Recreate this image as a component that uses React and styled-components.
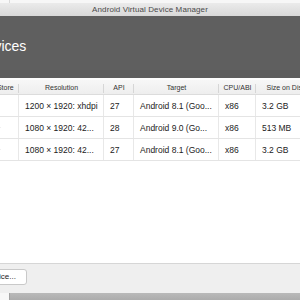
import React from 'react';
import styled, { createGlobalStyle } from 'styled-components';

const GlobalStyle = createGlobalStyle`
    html, body {
        margin: 0;
        padding: 0;
        width: 300px;
        height: 300px;
        overflow: hidden;
        background: #f7f7f7;
        font-family: "Liberation Sans", Arial, sans-serif;
    }
`

const Page = styled.div`
    display: flex;
    flex-direction: column;
    width: 300px;
    height: 300px;
    overflow: hidden;
`

const DeskStrip = styled.div`
    height: ${p => p.h}px;
    flex: none;
    background: ${p => p.bg};
    margin-left: 9px;
    border-left: 1px solid ${p => p.line};
`

const Window = styled.div`
    flex: none;
    display: flex;
    flex-direction: column;
    width: 500px;
    height: 290px;
    margin-left: -100px;
    background: #ececec;
`

const TitleBar = styled.div`
    height: 13px;
    flex: none;
    display: flex;
    align-items: center;
    justify-content: center;
    background: linear-gradient(#ebebeb, #d8d8d8);
    color: #4a4a4a;
    font-size: 8px;
    letter-spacing: 0.1px;
`

const Header = styled.div`
    height: 62px;
    flex: none;
    display: flex;
    align-items: center;
    padding-left: 1px;
    background: #5f5f5f;
    color: #ffffff;
    font-size: 14px;
    padding-bottom: 2px;
    box-sizing: border-box;
`

const Content = styled.div`
    flex: 1;
    display: flex;
    flex-direction: column;
    background: #ffffff;
    padding: 2px 0 0 8px;
`

const Grid = styled.div`
    display: grid;
    grid-template-columns: 32px 36px 43px 85px 30px 85px 37px 60px 64px;
`

const HeadRow = styled(Grid)`
    height: 14px;
    background: linear-gradient(#f7f7f7, #eeeeee);
    border-bottom: 1px solid #dcdcdc;
`

const HeadCell = styled.div`
    display: flex;
    align-items: center;
    justify-content: center;
    font-size: 7px;
    color: #333;
    position: relative;
    &:not(:last-child)::after {
        content: '';
        position: absolute;
        right: 0;
        top: 4px;
        bottom: 1px;
        width: 1px;
        background: #d6d6d6;
    }
`

const Row = styled(Grid)`
    height: 21px;
    border-bottom: 1px solid #e4e4e4;
`

const Cell = styled.div`
    display: flex;
    align-items: center;
    justify-content: ${p => (p.center ? 'center' : 'flex-start')};
    padding-left: ${p => (p.center ? 0 : 6)}px;
    font-size: 8.5px;
    color: #222;
    white-space: nowrap;
    overflow: hidden;
    border-right: 1px solid #e8e8e8;
    &:last-child {
        border-right: none;
    }
`

const Footer = styled.div`
    height: 30px;
    flex: none;
    box-sizing: border-box;
    display: flex;
    align-items: center;
    padding-left: 16px;
    background: #efefef;
    border-top: 1px solid #d6d6d6;
`

const Button = styled.button`
    height: 16px;
    width: 111px;
    padding: 0;
    background: #ffffff;
    border: 1px solid #c9c9c9;
    border-radius: 3px;
    font-family: "Liberation Sans", Arial, sans-serif;
    font-size: 8px;
    color: #222;
    margin-top: -4px;
`

const PhoneIcon = () => (
    <svg width="8" height="10" viewBox="0 0 8 10">
        <rect x="1" y="0.5" width="6" height="9" rx="1" fill="none" stroke="#777" />
    </svg>
)

const PlayIcon = () => (
    <svg width="7" height="7" viewBox="0 0 7 7">
        <path d="M0.5 0.5 L6.5 3.5 L0.5 6.5 Z" fill="#8a8a8a" />
    </svg>
)

const columns = ['Type', 'Name', 'Play Store', 'Resolution', 'API', 'Target', 'CPU/ABI', 'Size on Disk', 'Actions']

const devices = [
    {name: 'Pixel C API 27', store: false, res: '1200 × 1920: xhdpi', api: 27, target: 'Android 8.1 (Goo...', cpu: 'x86', size: '3.2 GB'},
    {name: 'Pixel 2 API 28', store: true, res: '1080 × 1920: 42...', api: 28, target: 'Android 9.0 (Go...', cpu: 'x86', size: '513 MB'},
    {name: 'Pixel 2 API 27', store: true, res: '1080 × 1920: 42...', api: 27, target: 'Android 8.1 (Goo...', cpu: 'x86', size: '3.2 GB'},
]

export default function App() {
    return (
        <>
            <GlobalStyle />
            <Page>
                <DeskStrip h={3} bg="#f7f7f7" line="#dadada" />
                <Window>
                    <TitleBar>Android Virtual Device Manager</TitleBar>
                    <Header>Your Virtual Devices</Header>
                    <Content>
                        <HeadRow>
                            {columns.map(c => <HeadCell key={c}>{c}</HeadCell>)}
                        </HeadRow>
                        {devices.map(d => (
                            <Row key={d.name}>
                                <Cell center><PhoneIcon /></Cell>
                                <Cell>{d.name}</Cell>
                                <Cell center>{d.store ? <PlayIcon /> : null}</Cell>
                                <Cell>{d.res}</Cell>
                                <Cell>{d.api}</Cell>
                                <Cell>{d.target}</Cell>
                                <Cell>{d.cpu}</Cell>
                                <Cell>{d.size}</Cell>
                                <Cell />
                            </Row>
                        ))}
                    </Content>
                    <Footer>
                        <Button>+ Create Virtual Device...</Button>
                    </Footer>
                </Window>
                <DeskStrip h={7} bg="linear-gradient(#b9b9b9, #acacac)" line="#a2a2a2" />
            </Page>
        </>
    )
}
